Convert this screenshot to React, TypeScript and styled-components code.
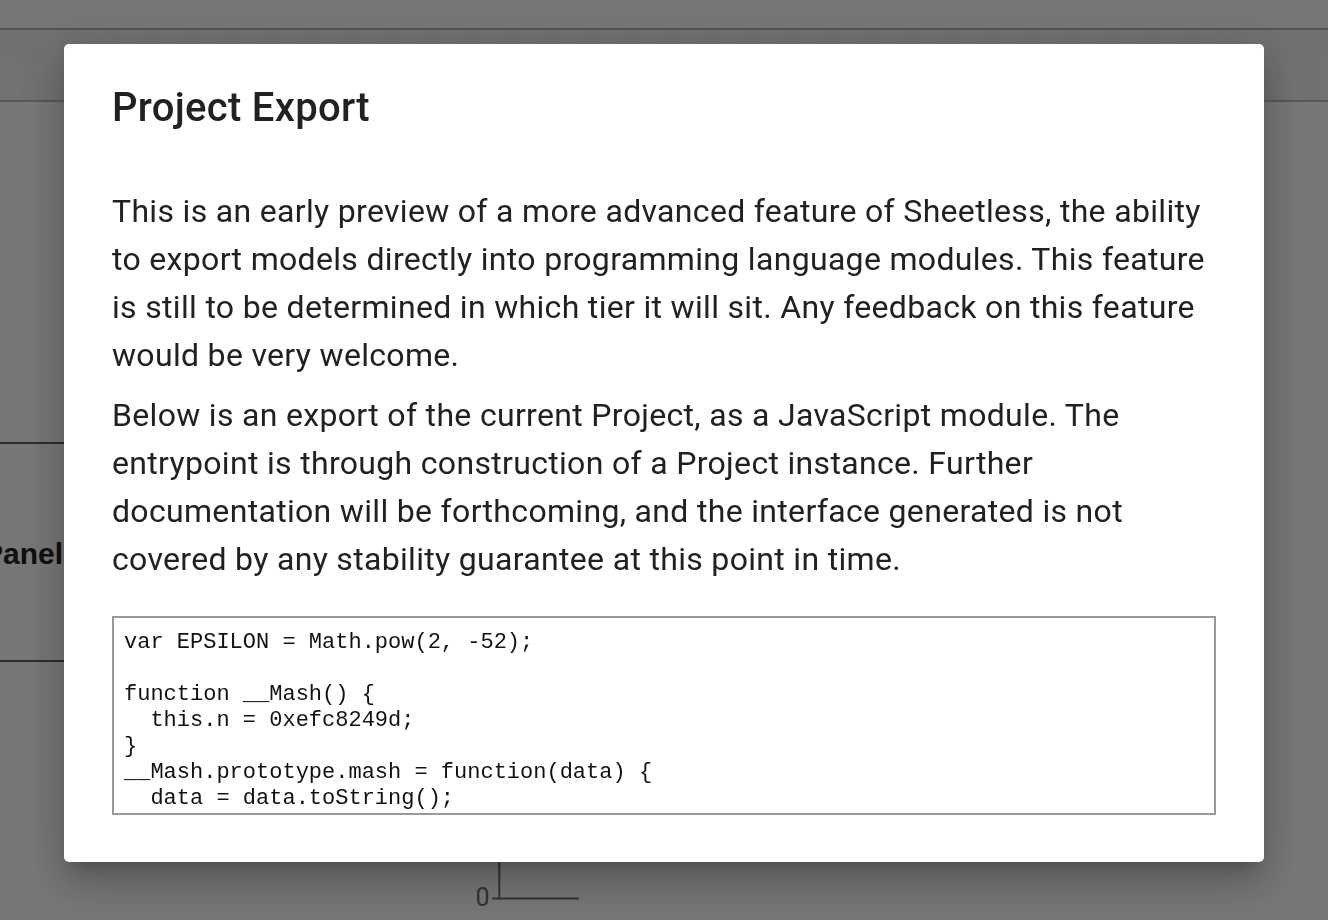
import React from 'react';
import styled, { createGlobalStyle } from 'styled-components';

const GlobalStyle = createGlobalStyle`
	html, body {
		margin: 0;
		padding: 0;
		height: 100%;
		overflow: hidden;
	}
	body {
		font-family: Roboto, 'Liberation Sans', Arial, sans-serif;
		color: #212121;
	}
	#root {
		height: 100%;
	}
`;

const Page = styled.div`
	height: 100vh;
	display: flex;
	flex-direction: column;
	background: #efefef;
	overflow: hidden;
`;

const TopBar = styled.div`
	height: 28px;
	flex: none;
	background: #ececec;
	border-bottom: 2px solid #a8a8a8;
`;

const HeaderStrip = styled.div`
	height: 70px;
	flex: none;
	border-bottom: 2px solid #b4b4b4;
	background-color: #e0e0e0;
	background-image: linear-gradient(90deg, rgba(255, 255, 255, 0.06) 50%, transparent 50%),
		linear-gradient(0deg, rgba(255, 255, 255, 0.05) 50%, transparent 50%);
	background-size: 40px 70px, 40px 66px;
`;

const Main = styled.div`
	flex: 1;
	display: flex;
	min-height: 0;
`;

const Sidebar = styled.div`
	width: 64px;
	flex: none;
	padding-top: 340px;
`;

const PanelSection = styled.div`
	height: 216px;
	border-top: 2px solid #5a5a5a;
	border-bottom: 2px solid #5a5a5a;
	display: flex;
	align-items: center;
	justify-content: flex-end;
`;

const PanelLabel = styled.span`
	flex: none;
	font-family: 'Liberation Sans', Arial, sans-serif;
	font-size: 30px;
	font-weight: 700;
	color: #202020;
	white-space: nowrap;
	margin-right: 1px;
	padding-top: 4px;
`;

const Content = styled.div`
	flex: 1;
	display: flex;
	flex-direction: column;
	justify-content: flex-end;
`;

const ChartArea = styled.div`
	margin-left: 400px;
	height: 120px;
`;

const Backdrop = styled.div`
	position: fixed;
	inset: 0;
	background: rgba(0, 0, 0, 0.5);
	display: flex;
	justify-content: center;
	align-items: flex-start;
	padding-top: 44px;
`;

const Dialog = styled.div`
	width: 1200px;
	box-sizing: border-box;
	background: #ffffff;
	border-radius: 5px;
	padding: 40px 48px 47px;
	box-shadow: 0px 11px 15px -7px rgba(0, 0, 0, 0.2), 0px 24px 38px 3px rgba(0, 0, 0, 0.14),
		0px 9px 46px 8px rgba(0, 0, 0, 0.12);
`;

const Title = styled.h2`
	margin: 0 0 55px;
	font-size: 40px;
	line-height: 48px;
	font-weight: 500;
	color: #212121;
	letter-spacing: 0.0075em;
`;

const Paragraph = styled.p`
	margin: 0 0 12px;
	font-size: 32px;
	line-height: 48px;
	font-weight: 400;
	color: #212121;
	letter-spacing: 0.01em;
`;

const CodeBox = styled.pre`
	margin: 33px 0 0;
	height: 199px;
	box-sizing: border-box;
	border: 2px solid #9a9a9a;
	padding: 12px 10px 10px;
	overflow: hidden;
	font-family: 'Liberation Mono', 'Courier New', monospace;
	font-size: 22px;
	line-height: 26px;
	color: #111111;
	background: #ffffff;
	white-space: pre;
`;

const code = `var EPSILON = Math.pow(2, -52);

function __Mash() {
  this.n = 0xefc8249d;
}
__Mash.prototype.mash = function(data) {
  data = data.toString();

  var n = this.n;
  for (var i = 0; i < data.length; i++) {
    n += data.charCodeAt(i);`;

const AxisChart = () => (
	<svg width="200" height="120" viewBox="0 0 200 120">
		<line x1="35.3" y1="0" x2="35.3" y2="99.5" stroke="#666" strokeWidth="2" />
		<line x1="28" y1="98.5" x2="115" y2="98.5" stroke="#666" strokeWidth="2" />
		<text
			x="25.5"
			y="105.5"
			textAnchor="end"
			fontSize="25"
			fontFamily="Roboto, sans-serif"
			fill="#666"
		>
			0
		</text>
	</svg>
);

const App = () => {
	return (
		<>
			<GlobalStyle />
			<Page>
				<TopBar />
				<HeaderStrip />
				<Main>
					<Sidebar>
						<PanelSection>
							<PanelLabel>Panel</PanelLabel>
						</PanelSection>
					</Sidebar>
					<Content>
						<ChartArea>
							<AxisChart />
						</ChartArea>
					</Content>
				</Main>
			</Page>
			<Backdrop>
				<Dialog>
					<Title>Project Export</Title>
					<Paragraph>
						This is an early preview of a more advanced feature of Sheetless, the ability to export
						models directly into programming language modules. This feature is still to be
						determined in which tier it will sit. Any feedback on this feature would be very welcome.
					</Paragraph>
					<Paragraph>
						Below is an export of the current Project, as a JavaScript module. The entrypoint is
						through construction of a Project instance. Further documentation will be forthcoming,
						and the interface generated is not covered by any stability guarantee at this point in
						time.
					</Paragraph>
					<CodeBox>{code}</CodeBox>
				</Dialog>
			</Backdrop>
		</>
	);
};

export default App;
